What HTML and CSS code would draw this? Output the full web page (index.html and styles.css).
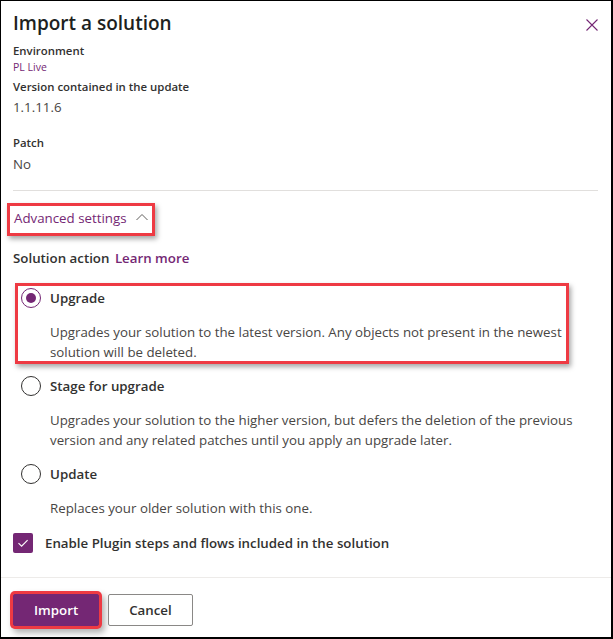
FILE: index.html
```html
<!DOCTYPE html>
<html lang="en">
<head>
<meta charset="utf-8">
<title>Import a solution</title>
<link rel="stylesheet" href="styles.css">
</head>
<body>
<div class="panel">
  <div class="content">
    <div class="head">
      <h1 class="title">Import a solution</h1>
      <button class="close" aria-label="Close">
        <svg width="12" height="12" viewBox="0 0 12 12"><path d="M0.5 0.5L11.5 11.5M11.5 0.5L0.5 11.5" stroke="currentColor" stroke-width="1.1" fill="none"/></svg>
      </button>
    </div>
    <div class="label-sm first">Environment</div>
    <div class="env">PL Live</div>
    <div class="label-sm version">Version contained in the update</div>
    <div class="value">1.1.11.6</div>
    <div class="label-sm patch">Patch</div>
    <div class="value no">No</div>
    <div class="divider"></div>
    <div class="adv-row">
      <a class="adv mark">Advanced settings
        <svg class="chev" width="12" height="8" viewBox="0 0 12 8"><path d="M0.5 7L6 1.5L11.5 7" stroke="currentColor" stroke-width="1" fill="none"/></svg>
      </a>
    </div>
    <div class="sa">Solution action <a class="learn">Learn more</a></div>
    <div class="options">
      <div class="opt opt-mark">
        <div class="opt-row"><span class="radio checked"></span><span class="opt-label">Upgrade</span></div>
        <div class="opt-desc">Upgrades your solution to the latest version. Any objects not present in the newest<br>solution will be deleted.</div>
      </div>
      <div class="opt">
        <div class="opt-row"><span class="radio"></span><span class="opt-label">Stage for upgrade</span></div>
        <div class="opt-desc">Upgrades your solution to the higher version, but defers the deletion of the previous<br>version and any related patches until you apply an upgrade later.</div>
      </div>
      <div class="opt">
        <div class="opt-row"><span class="radio"></span><span class="opt-label">Update</span></div>
        <div class="opt-desc">Replaces your older solution with this one.</div>
      </div>
    </div>
    <div class="check-row">
      <span class="checkbox"><svg width="20" height="20" viewBox="0 0 20 20"><path d="M5.5 10.2L8.6 13.2L14.6 7.2" stroke="#fff" stroke-width="1.1" fill="none"/></svg></span>
      <span class="check-label">Enable Plugin steps and flows included in the solution</span>
    </div>
  </div>
  <div class="footer">
    <button class="btn primary">Import</button>
    <button class="btn">Cancel</button>
  </div>
</div>
</body>
</html>
```
FILE: styles.css
```css
* { box-sizing: border-box; }
html, body { margin: 0; padding: 0; background: #fff; }
body {
  font-family: "Open Sans", "Noto Sans", "Liberation Sans", sans-serif;
  color: #323130;
  font-size: 13.3px;
}
.panel {
  width: 613px;
  height: 639px;
  border-left: 1px solid #000;
  border-top: 1px solid #000;
  border-right: 2px solid #000;
  border-bottom: 2px solid #000;
  display: flex;
  flex-direction: column;
}
.content {
  flex: 1;
  padding: 8px 13px 0 12px;
}
.head {
  display: flex;
  justify-content: space-between;
  align-items: center;
}
.title {
  margin: 0;
  font-size: 19px;
  line-height: 28px;
  font-weight: 600;
  color: #201f1e;
}
.close {
  border: 0;
  background: none;
  padding: 0;
  margin-top: 4px;
  width: 12px;
  height: 12px;
  color: #742774;
  display: flex;
}
.label-sm {
  font-size: 11.4px;
  line-height: 16px;
  font-weight: 600;
  color: #323130;
}
.first { margin-top: 6px; }
.env {
  font-size: 10.5px;
  line-height: 16px;
  color: #742774;
}
.version { margin-top: 4px; }
.value {
  margin-top: 2px;
  font-size: 13.3px;
  line-height: 20px;
  color: #484644;
}
.patch { margin-top: 18px; }
.no { margin-top: 3px; }
.divider {
  margin-top: 16px;
  height: 1px;
  background: #e1dfdd;
}
.adv-row {
  margin-top: 17px;
  line-height: 20px;
}
.adv {
  display: inline-flex;
  align-items: center;
  gap: 9px;
  margin-left: 1px;
  color: #742774;
  position: relative;
}
.chev { color: #605e5c; margin-top: -2px; }
.mark::after {
  content: "";
  position: absolute;
  left: -7px;
  right: -7px;
  top: -5px;
  bottom: -8px;
  border: 3px solid #ee3a43;
  box-shadow: 2px 3px 5px rgba(0,0,0,0.35);
}
.sa {
  margin-top: 20px;
  line-height: 20px;
  font-weight: 600;
}
.learn {
  color: #742774;
  margin-left: 2px;
}
.options {
  display: flex;
  flex-direction: column;
  gap: 14px;
  margin-top: 20px;
}
.opt {
  padding-left: 8px;
  position: relative;
}
.opt-mark::after {
  content: "";
  position: absolute;
  left: 2px;
  right: 29px;
  top: -5px;
  bottom: -2px;
  border: 3px solid #ee3a43;
  box-shadow: 2px 3px 5px rgba(0,0,0,0.35);
}
.opt-row {
  display: flex;
  align-items: center;
  gap: 9px;
  height: 20px;
}
.radio {
  width: 20px;
  height: 20px;
  border-radius: 50%;
  border: 1px solid #323130;
  display: flex;
  align-items: center;
  justify-content: center;
}
.radio.checked { border-color: #742774; }
.radio.checked::before {
  content: "";
  width: 10px;
  height: 10px;
  border-radius: 50%;
  background: #742774;
}
.opt-label {
  font-weight: 600;
  line-height: 20px;
}
.opt-desc {
  margin-top: 14px;
  padding-left: 29px;
  line-height: 20px;
  color: #484644;
  white-space: nowrap;
}
.check-row {
  margin-top: 15px;
  display: flex;
  align-items: center;
  gap: 12px;
}
.checkbox {
  width: 20px;
  height: 20px;
  border-radius: 2px;
  background: #742774;
  display: flex;
}
.check-label {
  font-weight: 600;
  line-height: 20px;
}
.footer {
  border-top: 1px solid #edebe9;
  padding: 16px 12px 11px;
  display: flex;
  gap: 9px;
}
.btn {
  font-family: inherit;
  font-size: 13.3px;
  font-weight: 600;
  height: 32px;
  min-width: 80px;
  padding: 0 20px;
  border: 1px solid #8a8886;
  border-radius: 2px;
  background: #fff;
  color: #323130;
  position: relative;
}
.btn.primary {
  background: #742774;
  border-color: #742774;
  color: #fff;
  min-width: 85px;
  box-shadow: 0 0 0 3px #ee3a43, 3px 4px 6px 3px rgba(0,0,0,0.3);
}
```
